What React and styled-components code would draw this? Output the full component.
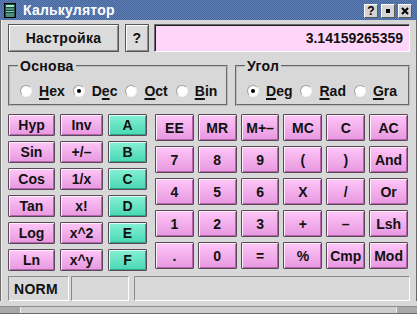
import React from 'react'
import styled, { createGlobalStyle } from 'styled-components'

const Global = createGlobalStyle`
  html, body {
    margin: 0;
    padding: 0;
    background: #d8d8d8;
  }
  body {
    font-family: "Liberation Sans", Arial, sans-serif;
  }
`

const Window = styled.div`
  width: 417px;
  height: 314px;
  display: flex;
  flex-direction: column;
  background: #d8d8d8;
  overflow: hidden;
`

const TitleBar = styled.div`
  height: 20px;
  flex: none;
  display: flex;
  align-items: center;
  padding: 0 5px 0 4px;
  background: repeating-conic-gradient(#6080b6 0 25%, #45659d 0 50%) 0 0 / 2px 2px;
  color: #fff;
  font: bold 14px "Liberation Sans", Arial, sans-serif;
`

const Title = styled.span`
  margin-left: 7px;
  flex: 1;
  letter-spacing: 0.2px;
`

const TitleButtons = styled.div`
  display: flex;
  gap: 3px;
  align-self: flex-end;
  margin-bottom: 2px;
`

const TitleButton = styled.div`
  width: 14px;
  height: 14px;
  box-sizing: border-box;
  display: flex;
  align-items: center;
  justify-content: center;
  background: #d4d4d4;
  border: 1px solid;
  border-color: #fff #5a5a5a #5a5a5a #fff;
  color: #000;
  font: bold 12px "Liberation Sans", Arial, sans-serif;
  line-height: 1;
`

const Dot = styled.span`
  width: 4px;
  height: 4px;
  background: #000;
`

const Body = styled.div`
  flex: 1;
  display: flex;
  flex-direction: column;
  padding: 4px 6px 0 7px;
  border-left: 1px solid #6a6a6a;
  border-right: 1px solid #6a6a6a;
  box-shadow: inset 1px 0 0 #f2f2f2;
`

const TopRow = styled.div`
  display: flex;
  height: 28px;
  gap: 6px;
`

const PlainButton = styled.button`
  width: ${p => p.$w}px;
  height: 100%;
  padding: 0;
  background: #dcdcdc;
  border: 1px solid #555;
  box-shadow: inset 1px 1px 0 #fff, inset -1px -1px 0 #8c8c8c;
  color: #111;
  font: bold 14px "Liberation Sans", Arial, sans-serif;
  letter-spacing: 0.3px;
`

const Display = styled.div`
  flex: 1;
  margin-left: -1px;
  display: flex;
  align-items: center;
  justify-content: flex-end;
  padding-right: 6px;
  background: #ffd6f9;
  border: 1px solid;
  border-color: #6a6a6a #fff #fff #6a6a6a;
  box-shadow: inset 1px 1px 0 #1e1e1e;
  color: #111;
  font: bold 14px "Liberation Sans", Arial, sans-serif;
`

const GroupRow = styled.div`
  display: flex;
  gap: 7px;
  margin-top: 6px;
  height: 48px;
`

const Group = styled.fieldset`
  margin: 0;
  box-sizing: border-box;
  height: 48px;
  width: ${p => (p.$w ? `${p.$w}px` : 'auto')};
  flex: ${p => (p.$w ? 'none' : '1')};
  min-width: 0;
  padding: 0 4px 0 8px;
  border: 2px groove #bcbcbc;
  display: flex;
  align-items: center;
`

const Legend = styled.legend`
  padding: 0 2px;
  font: bold 14px "Liberation Sans", Arial, sans-serif;
  line-height: 16px;
  letter-spacing: 0.3px;
  color: #111;
`

const Radios = styled.div`
  display: flex;
  align-items: center;
  gap: 8px;
  margin: 4px 0 0 2px;
`

const RadioItem = styled.label`
  display: flex;
  align-items: center;
  gap: 7px;
  font: bold 14px "Liberation Sans", Arial, sans-serif;
  color: #111;
`

const Circle = styled.span`
  width: 12px;
  height: 12px;
  box-sizing: border-box;
  border-radius: 50%;
  background: #fff;
  border: 1px solid;
  border-color: #a0a0a0 #f4f4f4 #f4f4f4 #a0a0a0;
  display: flex;
  align-items: center;
  justify-content: center;
  &::after {
    content: '';
    display: ${p => (p.$on ? 'block' : 'none')};
    width: 4px;
    height: 4px;
    border-radius: 50%;
    background: #000;
  }
`

const Accel = styled.span`
  text-decoration: underline;
  text-decoration-thickness: 2px;
  text-underline-offset: 2px;
`

const Keypad = styled.div`
  display: flex;
  gap: 8px;
  margin-top: 8px;
  align-items: flex-start;
`

const SciGrid = styled.div`
  display: grid;
  grid-template-columns: 47px 43px 39px;
  grid-template-rows: repeat(6, 22px);
  gap: 5px;
`

const NumGrid = styled.div`
  width: 253px;
  display: grid;
  grid-template-columns: repeat(6, 1fr);
  grid-template-rows: repeat(5, 27px);
  gap: 5px 4px;
`

const Key = styled.button`
  padding: 0;
  border: 1px solid #5a4858;
  border-radius: 1px;
  background: ${p =>
    p.$tone === 'teal'
      ? 'linear-gradient(#86f0d4, #48d8b4)'
      : 'linear-gradient(#fdc6f6, #e898e0)'};
  box-shadow: inset 1px 1px 0 ${p => (p.$tone === 'teal' ? '#d8fff4' : '#ffeefc')},
    inset -1px -1px 0 ${p => (p.$tone === 'teal' ? '#2ea487' : '#b464ac')};
  color: #111;
  font: bold 14px "Liberation Sans", Arial, sans-serif;
  white-space: nowrap;
`

const StatusBar = styled.div`
  display: flex;
  height: 25px;
  margin-top: 5px;
`

const StatusCell = styled.div`
  width: ${p => (p.$w ? `${p.$w}px` : 'auto')};
  flex: ${p => (p.$w ? 'none' : '1')};
  margin-right: ${p => p.$gap || 0}px;
  box-sizing: border-box;
  display: flex;
  align-items: center;
  padding-left: 5px;
  border: 1px solid;
  border-color: #8a8a8a #fff #fff #8a8a8a;
  color: #111;
  font: bold 14px "Liberation Sans", Arial, sans-serif;
  letter-spacing: 0.3px;
`

const Handle = styled.div`
  height: 8px;
  flex: none;
  margin-top: 5px;
  display: flex;
  background: #cdcdcd;
  border-top: 1px solid #8c8c8c;
  border-bottom: 1px solid #6a6a6a;
  box-sizing: border-box;
`

const Grip = styled.div`
  width: 20px;
  background: #a9a9a9;
  border-right: ${p => (p.$end ? 'none' : '1px solid #f0f0f0')};
  border-left: ${p => (p.$end ? '1px solid #f0f0f0' : 'none')};
`

const HandleMid = styled.div`
  flex: 1;
`

const sciKeys = [
  ['Hyp', 'Inv', 'A'],
  ['Sin', '+/–', 'B'],
  ['Cos', '1/x', 'C'],
  ['Tan', 'x!', 'D'],
  ['Log', 'x^2', 'E'],
  ['Ln', 'x^y', 'F'],
]

const numKeys = [
  'EE', 'MR', 'M+–', 'MC', 'C', 'AC',
  '7', '8', '9', '(', ')', 'And',
  '4', '5', '6', 'X', '/', 'Or',
  '1', '2', '3', '+', '–', 'Lsh',
  '.', '0', '=', '%', 'Cmp', 'Mod',
]

const Radio = ({ on, pre, acc, post }) => (
  <RadioItem>
    <Circle $on={on} />
    <span>
      {pre}
      <Accel>{acc}</Accel>
      {post}
    </span>
  </RadioItem>
)

const CalcIcon = () => (
  <svg width="12" height="15" viewBox="0 0 12 15">
    <rect x="0.5" y="0.5" width="11" height="14" fill="#1f4a3e" stroke="#000" />
    <rect x="2" y="2" width="8" height="2" fill="#9fe6cf" />
    <rect x="2" y="5.5" width="8" height="1" fill="#7fd0b8" />
    <rect x="2" y="8" width="8" height="1" fill="#7fd0b8" />
    <rect x="2" y="10.5" width="8" height="1" fill="#7fd0b8" />
    <rect x="2" y="12.5" width="8" height="1" fill="#7fd0b8" />
  </svg>
)

const CloseGlyph = () => (
  <svg width="8" height="8" viewBox="0 0 8 8">
    <path d="M1 1L7 7M7 1L1 7" stroke="#000" strokeWidth="2" />
  </svg>
)

export default function App() {
  return (
    <>
      <Global />
      <Window>
        <TitleBar>
          <CalcIcon />
          <Title>Калькулятор</Title>
          <TitleButtons>
            <TitleButton>?</TitleButton>
            <TitleButton>
              <Dot />
            </TitleButton>
            <TitleButton>
              <CloseGlyph />
            </TitleButton>
          </TitleButtons>
        </TitleBar>

        <Body>
          <TopRow>
            <PlainButton $w={111}>Настройка</PlainButton>
            <PlainButton $w={24}>?</PlainButton>
            <Display>3.14159265359</Display>
          </TopRow>

          <GroupRow>
            <Group $w={220}>
              <Legend>Основа</Legend>
              <Radios>
                <Radio acc="H" post="ex" />
                <Radio on pre="D" acc="e" post="c" />
                <Radio acc="O" post="ct" />
                <Radio acc="B" post="in" />
              </Radios>
            </Group>
            <Group>
              <Legend>Угол</Legend>
              <Radios>
                <Radio on acc="D" post="eg" />
                <Radio acc="R" post="ad" />
                <Radio acc="G" post="ra" />
              </Radios>
            </Group>
          </GroupRow>

          <Keypad>
            <SciGrid>
              {sciKeys.flat().map((k, i) => (
                <Key key={k} $tone={i % 3 === 2 ? 'teal' : 'pink'}>
                  {k}
                </Key>
              ))}
            </SciGrid>
            <NumGrid>
              {numKeys.map(k => (
                <Key key={k}>{k}</Key>
              ))}
            </NumGrid>
          </Keypad>

          <StatusBar>
            <StatusCell $w={61} $gap={2}>NORM</StatusCell>
            <StatusCell $w={58} $gap={5} />
            <StatusCell />
          </StatusBar>
        </Body>

        <Handle>
          <Grip />
          <HandleMid />
          <Grip $end />
        </Handle>
      </Window>
    </>
  )
}
